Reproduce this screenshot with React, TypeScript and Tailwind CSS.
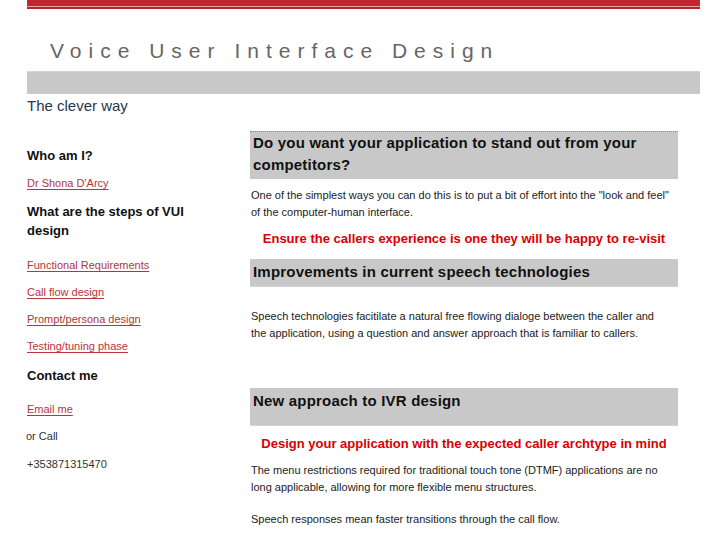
import React from "react";

const font = { fontFamily: '"Liberation Sans", Arial, Helvetica, sans-serif' };

function Band({ children, className = "" }: { children: React.ReactNode; className?: string }) {
  return (
    <div className={"bg-[#c8c8c8] px-[3px] text-[15px] font-bold leading-[22px] text-[#111] tracking-[0.2px] " + className}>
      {children}
    </div>
  );
}

function NavLink({ children, className = "" }: { children: React.ReactNode; className?: string }) {
  return (
    <a href="#" className={"block text-[11px] leading-[15px] text-[#b8333b] underline underline-offset-2 decoration-1 " + className}>
      {children}
    </a>
  );
}

export default function App() {
  return (
    <div className="min-h-[545px] bg-white" style={font}>
      <div className="ml-[27px] w-[673px]">
        <div className="h-[6px] bg-[#c1272d]" />
        <div className="h-px bg-[#e9a3a7]" />
        <div className="h-[2px] bg-[#b7232b]" />

        <h1 className="mt-[30px] pl-[23px] text-[21px] leading-[24px] font-normal tracking-[7px] text-[#666]">
          Voice User Interface Design
        </h1>
        <div className="mt-[8px] h-[23px] bg-[#c8c8c8] border-t border-dotted border-[#e0e0e0]" />
        <div className="mt-[3px] text-[15px] leading-[18px] text-[#2a3550]">The clever way</div>

        <div className="flex">
          <div className="w-[223px] shrink-0 flex flex-col">
            <div className="mt-[31px] text-[13px] leading-[19px] font-bold text-[#111]">Who am I?</div>
            <NavLink className="mt-[11px]">Dr Shona D'Arcy</NavLink>
            <div className="mt-[11px] w-[190px] text-[13px] leading-[19px] font-bold text-[#111]">
              What are the steps of VUI design
            </div>
            <NavLink className="mt-[18px]">Functional Requirements</NavLink>
            <NavLink className="mt-[12px]">Call flow design</NavLink>
            <NavLink className="mt-[12px]">Prompt/persona design</NavLink>
            <NavLink className="mt-[12px]">Testing/tuning phase</NavLink>
            <div className="mt-[12px] text-[13px] leading-[19px] font-bold text-[#111]">Contact me</div>
            <NavLink className="mt-[17px]">Email me</NavLink>
            <div className="mt-[12px] -ml-px text-[11px] leading-[15px] text-[#333]">or Call</div>
            <div className="mt-[13px] text-[11px] leading-[15px] text-[#333]">+353871315470</div>
          </div>

          <div className="w-[428px] shrink-0 mt-[16px] text-[11px] leading-[17px] text-[#222]">
            <Band className="border-t border-dotted border-[#888] pb-[3px]">
              Do you want your application to stand out from your competitors?
            </Band>
            <p className="mt-[8px] pl-px w-[421px]">
              One of the simplest ways you can do this is to put a bit of effort into the "look and feel" of the computer-human interface.
            </p>
            <div className="mt-[9px] text-center text-[13px] leading-[18px] font-bold text-[#d90000]">
              Ensure the callers experience is one they will be happy to re-visit
            </div>
            <Band className="mt-[11px] pt-[2px] pb-[3px] border-b border-dotted border-[#ddd]">
              Improvements in current speech technologies
            </Band>
            <p className="mt-[21px] pl-px w-[421px]">
              Speech technologies facitilate a natural free flowing dialoge between the caller and the application, using a question and answer approach that is familiar to callers.
            </p>
            <Band className="mt-[46px] pt-[2px] pb-[13px] border-b border-dotted border-[#ddd]">
              New approach to IVR design
            </Band>
            <div className="mt-[9px] text-center text-[13px] leading-[18px] font-bold text-[#d90000]">
              Design your application with the expected caller archtype in mind
            </div>
            <p className="mt-[9px] pl-px w-[421px]">
              The menu restrictions required for traditional touch tone (DTMF) applications are no long applicable, allowing for more flexible menu structures.
            </p>
            <p className="mt-[15px] pl-px">Speech responses mean faster transitions through the call flow.</p>
          </div>
        </div>
      </div>
    </div>
  );
}
